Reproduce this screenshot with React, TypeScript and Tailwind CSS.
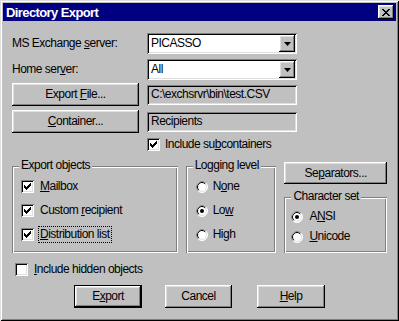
import React from "react";

const raised =
  "shadow-[inset_-1px_-1px_#000,inset_1px_1px_#fff,inset_-2px_-2px_#808080,inset_2px_2px_#dfdfdf]";
const sunken =
  "shadow-[inset_1px_1px_#808080,inset_-1px_-1px_#fff,inset_2px_2px_#000,inset_-2px_-2px_#dfdfdf]";
const etched =
  "shadow-[inset_1px_1px_#808080,inset_-1px_-1px_#fff,inset_2px_2px_#fff,inset_-2px_-2px_#808080]";

const checkPixels = [
  [6, 0], [5, 1], [6, 1], [0, 2], [4, 2], [5, 2], [6, 2],
  [0, 3], [1, 3], [3, 3], [4, 3], [5, 3], [0, 4], [1, 4], [2, 4], [3, 4], [4, 4],
  [1, 5], [2, 5], [3, 5], [2, 6],
];

const xPixels = [
  [0, 0], [1, 0], [6, 0], [7, 0], [1, 1], [2, 1], [5, 1], [6, 1],
  [2, 2], [3, 2], [4, 2], [5, 2], [3, 3], [4, 3],
  [2, 4], [3, 4], [4, 4], [5, 4], [1, 5], [2, 5], [5, 5], [6, 5],
  [0, 6], [1, 6], [6, 6], [7, 6],
];

const Pixels = ({ pts, w, h }: { pts: number[][]; w: number; h: number }) => (
  <svg width={w} height={h} viewBox={`0 0 ${w} ${h}`} shapeRendering="crispEdges">
    {pts.map(([x, y]) => (
      <rect key={`${x}-${y}`} x={x} y={y} width={1} height={1} fill="#000" />
    ))}
  </svg>
);

const Check = ({ checked }: { checked?: boolean }) => (
  <div className={`w-[13px] h-[13px] shrink-0 bg-white flex items-center justify-center ${sunken}`}>
    {checked && <Pixels pts={checkPixels} w={7} h={7} />}
  </div>
);

const Radio = ({ on }: { on?: boolean }) => (
  <svg width="12" height="12" viewBox="0 0 12 12" className="shrink-0">
    <circle cx="6" cy="6" r="5.5" fill="#fff" stroke="#fff" />
    <path d="M 2.1 9.9 A 5.5 5.5 0 0 1 9.9 2.1" fill="none" stroke="#808080" />
    <circle cx="6" cy="6" r="4.5" fill="#fff" stroke="#dfdfdf" />
    <path d="M 2.8 9.2 A 4.5 4.5 0 0 1 9.2 2.8" fill="none" stroke="#000" />
    {on && <circle cx="6" cy="6" r="2" fill="#000" />}
  </svg>
);

const Btn = ({
  children,
  className = "",
  isDefault,
}: {
  children: React.ReactNode;
  className?: string;
  isDefault?: boolean;
}) =>
  isDefault ? (
    <div className={`border border-black ${className}`}>
      <div className={`w-full h-full flex items-center justify-center ${raised}`}>
        <span>{children}</span>
      </div>
    </div>
  ) : (
    <div className={`flex items-center justify-center ${raised} ${className}`}>
      <span>{children}</span>
    </div>
  );

const Combo = ({ value }: { value: string }) => (
  <div className={`w-[150px] h-[21px] bg-white flex items-center pl-[4px] pr-[2px] ${sunken}`}>
    <span className="flex-1">{value}</span>
    <div className={`w-[16px] h-[17px] bg-[#c0c0c0] flex items-center justify-center ${raised}`}>
      <svg width="7" height="4" viewBox="0 0 7 4">
        <polygon points="0,0 7,0 3.5,4" fill="#000" />
      </svg>
    </div>
  </div>
);

const Field = ({ value }: { value: string }) => (
  <div className={`w-[150px] h-[20px] flex items-center pl-[4px] ${sunken}`}>{value}</div>
);

const Group = ({
  label,
  className = "",
  children,
}: {
  label: string;
  className?: string;
  children: React.ReactNode;
}) => (
  <div className={`relative ${etched} ${className}`}>
    <span className="absolute -top-[8px] left-[7px] bg-[#c0c0c0] px-[2px] leading-[15px]">{label}</span>
    {children}
  </div>
);

export default function App() {
  return (
    <div
      className="w-[399px] h-[321px] bg-[#c0c0c0] p-[3px] text-[12px] tracking-[-0.5px] text-black leading-[15px] shadow-[inset_1px_1px_#dfdfdf,inset_-1px_-1px_#000,inset_2px_2px_#fff,inset_-2px_-2px_#808080]"
      style={{ fontFamily: '"Liberation Sans", Arial, sans-serif' }}
    >
      {/* title bar */}
      <div className="h-[18px] bg-[#000080] flex items-center justify-between pl-[3px] pr-[2px]">
        <span className="text-white font-bold text-[13px] tracking-[-0.6px]">Directory Export</span>
        <div className={`w-[16px] h-[14px] bg-[#c0c0c0] flex items-center justify-center ${raised}`}>
          <Pixels pts={xPixels} w={8} h={7} />
        </div>
      </div>

      <div className="px-[9px]">
        <div className="mt-[12px] flex items-center">
          <span className="w-[135px]">
            MS Exchange <u>s</u>erver:
          </span>
          <Combo value="PICASSO" />
        </div>
        <div className="mt-[5px] flex items-center">
          <span className="w-[135px]">
            Home ser<u>v</u>er:
          </span>
          <Combo value="All" />
        </div>
        <div className="mt-[3px] flex items-center gap-[8px]">
          <Btn className="w-[127px] h-[23px]">
            Export <u>F</u>ile...
          </Btn>
          <Field value="C:\exchsrvr\bin\test.CSV" />
        </div>
        <div className="mt-[4px] flex items-center gap-[8px]">
          <Btn className="w-[127px] h-[23px]">
            <u>C</u>ontainer...
          </Btn>
          <Field value="Recipients" />
        </div>
        <div className="mt-[4px] pl-[135px] flex items-center gap-[5px]">
          <Check checked />
          <span>
            Include su<u>b</u>containers
          </span>
        </div>

        <div className="mt-[10px] flex items-start gap-[8px]">
          <Group label="Export objects" className="mt-[4px] w-[168px] h-[87px]">
            <div className="pt-[13px] pl-[9px] flex flex-col gap-[9px]">
              <div className="flex items-center gap-[6px]">
                <Check checked />
                <span>
                  <u>M</u>ailbox
                </span>
              </div>
              <div className="flex items-center gap-[6px]">
                <Check checked />
                <span>
                  Custom <u>r</u>ecipient
                </span>
              </div>
              <div className="flex items-center gap-[6px]">
                <Check checked />
                <span className="outline outline-1 outline-dotted outline-black -ml-[1px] px-[1px]">
                  <u>D</u>istribution list
                </span>
              </div>
            </div>
          </Group>

          <Group label="Logging level" className="mt-[4px] w-[92px] h-[87px]">
            <div className="pt-[13px] pl-[10px] flex flex-col gap-[9px]">
              <div className="flex items-center gap-[5px]">
                <Radio />
                <span>
                  N<u>o</u>ne
                </span>
              </div>
              <div className="flex items-center gap-[5px]">
                <Radio on />
                <span>
                  Lo<u>w</u>
                </span>
              </div>
              <div className="flex items-center gap-[5px]">
                <Radio />
                <span>
                  Hi<u>g</u>h
                </span>
              </div>
            </div>
          </Group>

          <div className="w-[104px] flex flex-col">
            <Btn className="h-[22px]">
              Se<u>p</u>arators...
            </Btn>
            <Group label="Character set" className="mt-[13px] h-[56px]">
              <div className="pt-[12px] pl-[7px] flex flex-col gap-[5px]">
                <div className="flex items-center gap-[6px]">
                  <Radio on />
                  <span>
                    A<u>N</u>SI
                  </span>
                </div>
                <div className="flex items-center gap-[6px]">
                  <Radio />
                  <span>
                    <u>U</u>nicode
                  </span>
                </div>
              </div>
            </Group>
          </div>
        </div>

        <div className="mt-[9px] pl-[3px] flex items-center gap-[6px]">
          <Check />
          <span>
            <u>I</u>nclude hidden objects
          </span>
        </div>

        <div className="mt-[8px] pl-[62px] flex items-center">
          <Btn isDefault className="w-[68px] h-[23px]">
            E<u>x</u>port
          </Btn>
          <Btn className="ml-[23px] w-[67px] h-[23px]">Cancel</Btn>
          <Btn className="ml-[25px] w-[68px] h-[23px]">
            <u>H</u>elp
          </Btn>
        </div>
      </div>
    </div>
  );
}
